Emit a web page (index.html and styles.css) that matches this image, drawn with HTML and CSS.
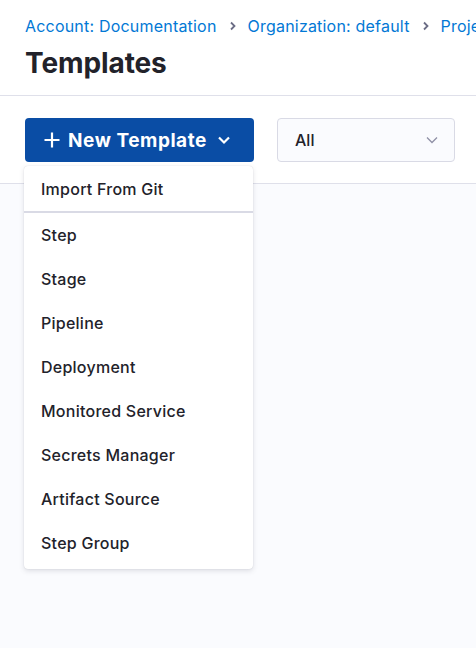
FILE: index.html
```html
<!DOCTYPE html>
<html>
<head>
<meta charset="utf-8">
<link rel="stylesheet" href="styles.css">
</head>
<body>
<div class="page">
  <header class="header">
    <nav class="crumbs">
      <a class="crumb">Account: Documentation</a>
      <svg class="sep" width="8" height="10" viewBox="0 0 8 10"><path d="M2 1.5 L5.5 5 L2 8.5" fill="none" stroke="#6b6d85" stroke-width="1.8"/></svg>
      <a class="crumb">Organization: default</a>
      <svg class="sep" width="8" height="10" viewBox="0 0 8 10"><path d="M2 1.5 L5.5 5 L2 8.5" fill="none" stroke="#6b6d85" stroke-width="1.8"/></svg>
      <a class="crumb">Project: docs</a>
    </nav>
    <h1 class="title">Templates</h1>
  </header>
  <div class="toolbar">
    <div class="btn-wrap">
      <button class="btn">
        <svg class="plus" width="18" height="18" viewBox="0 0 18 18"><path d="M9 1.5 V16.5 M1.5 9 H16.5" stroke="#fff" stroke-width="2.2"/></svg>
        <span>New Template</span>
        <svg class="caret" width="14" height="10" viewBox="0 0 14 10"><path d="M2 2.5 L7 7.5 L12 2.5" fill="none" stroke="#fff" stroke-width="2.2"/></svg>
      </button>
      <div class="menu">
        <div class="item">Import From Git</div>
        <div class="divider"></div>
        <div class="item">Step</div>
        <div class="item">Stage</div>
        <div class="item">Pipeline</div>
        <div class="item">Deployment</div>
        <div class="item">Monitored Service</div>
        <div class="item">Secrets Manager</div>
        <div class="item">Artifact Source</div>
        <div class="item">Step Group</div>
      </div>
    </div>
    <div class="select">
      <span>All</span>
      <svg width="14" height="10" viewBox="0 0 14 10"><path d="M2 2.5 L7 7.5 L12 2.5" fill="none" stroke="#8f90a6" stroke-width="1.3"/></svg>
    </div>
  </div>
  <main class="content"></main>
</div>
</body>
</html>
```
FILE: styles.css
```css
html, body {
  margin: 0;
  padding: 0;
}
body {
  font-family: Inter, "Noto Sans", sans-serif;
  background: #fafbfe;
  width: 476px;
  height: 648px;
  overflow: hidden;
}
.page {
  display: flex;
  flex-direction: column;
  height: 648px;
  overflow: hidden;
}
.header {
  background: #fff;
  padding: 15px 0 0 25px;
  height: 80px;
  border-bottom: 1.5px solid #dfe0ea;
  box-sizing: content-box;
  overflow: hidden;
}
.crumbs {
  display: flex;
  align-items: center;
  white-space: nowrap;
  font-size: 16px;
  line-height: 22px;
  letter-spacing: 0.2px;
}
.crumb {
  color: #0278d5;
  flex-shrink: 0;
}
.sep {
  flex-shrink: 0;
  margin: 0 11px 0 12px;
}
.title {
  margin: 9px 0 0 0;
  font-size: 28px;
  font-weight: 700;
  line-height: 34px;
  color: #22222a;
  letter-spacing: -0.1px;
}
.toolbar {
  background: #fff;
  height: 88px;
  border-bottom: 1px solid #dfe0ea;
  display: flex;
  align-items: flex-start;
  padding: 22px 0 0 25px;
  box-sizing: border-box;
  gap: 23px;
}
.btn-wrap {
  position: relative;
}
.btn {
  width: 229px;
  height: 44px;
  background: #0a4da5;
  border: none;
  border-radius: 4px;
  color: #fff;
  font-family: Inter, "Noto Sans", sans-serif;
  font-size: 19px;
  font-weight: 700;
  letter-spacing: 0.55px;
  display: flex;
  align-items: center;
  padding: 0 0 0 18px;
}
.btn .plus {
  margin-right: 7px;
}
.btn .caret {
  margin-left: 10px;
}
.menu {
  position: absolute;
  left: -1px;
  top: 48px;
  width: 229px;
  background: #fff;
  border-radius: 4px;
  box-shadow: 0 0 1px rgba(40, 41, 61, 0.2), 0 2px 5px rgba(96, 97, 112, 0.18);
  padding: 1px 0 4px 0;
  z-index: 2;
}
.item {
  height: 44px;
  line-height: 44px;
  padding-left: 17px;
  font-size: 16px;
  color: #22222a;
  font-weight: 500;
  letter-spacing: 0.25px;
}
.divider {
  height: 2px;
  background: #d9dae5;
}
.select {
  width: 178px;
  height: 44px;
  box-sizing: border-box;
  border: 1px solid #d9dae5;
  border-radius: 4px;
  background: #fafbfe;
  display: flex;
  align-items: center;
  justify-content: space-between;
  padding: 0 15px 0 17px;
  font-size: 16px;
  font-weight: 500;
  color: #22222a;
}
.content {
  flex: 1;
  background: #fafbfe;
}
```
